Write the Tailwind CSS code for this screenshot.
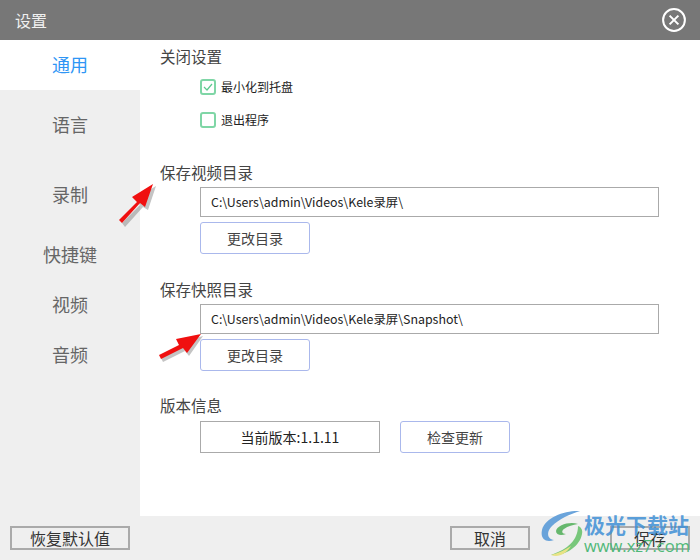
<!DOCTYPE html>
<html lang="zh">
<head>
<meta charset="utf-8">
<script src="https://cdn.jsdelivr.net/npm/@tailwindcss/browser@4"></script>
</head>
<body class="bg-white">
<div class="relative w-[700px] h-[560px] overflow-hidden flex flex-col bg-white text-[#333] font-['Noto_Sans_CJK_SC','Noto_Sans',sans-serif]">
  <header class="h-10 shrink-0 bg-[#777777] flex items-center justify-between pl-[15px] pr-[14px]">
    <span class="text-[#f0f0f0] text-[16px] leading-none">设置</span>
    <svg class="w-6 h-6" viewBox="0 0 24 24" fill="none" stroke="#ffffff"><circle cx="12" cy="12" r="10.9" stroke-width="2"/><path d="M7.6 7.6 16.4 16.4M16.4 7.6 7.6 16.4" stroke-width="2"/></svg>
  </header>
  <div class="flex-1 flex min-h-0">
    <nav class="w-[140px] shrink-0 bg-[#efefef] flex flex-col text-[18px] text-[#666] text-center">
      <div class="h-[50px] pb-[1px] bg-white text-[#2f96f5] flex items-center justify-center">通用</div>
      <div class="h-[70px] pb-[1px] flex items-center justify-center">语言</div>
      <div class="h-[70px] pb-[1px] flex items-center justify-center">录制</div>
      <div class="h-[50px] pb-[1px] flex items-center justify-center">快捷键</div>
      <div class="h-[50px] pb-[1px] flex items-center justify-center">视频</div>
      <div class="h-[50px] pb-[1px] flex items-center justify-center">音频</div>
    </nav>
    <main class="flex-1 pl-5 pr-[41px] flex flex-col text-[#444]">
      <h2 class="h-6 mt-[4px] text-[15.5px] leading-6 font-normal">关闭设置</h2>
      <div class="pl-10 mt-[11px] flex flex-col gap-[17px] text-[12px] text-[#222]">
        <label class="h-4 flex items-center gap-[5px]">
          <span class="w-4 h-4 border-2 border-[#7fd6a6] rounded-[3px] flex items-center justify-center">
            <svg class="w-[10px] h-[10px]" viewBox="0 0 10 10" fill="none" stroke="#5cc98e" stroke-width="1.2"><path d="M1 5 4 8 9 2"/></svg>
          </span>最小化到托盘
        </label>
        <label class="h-4 flex items-center gap-[5px]">
          <span class="w-4 h-4 border-2 border-[#7fd6a6] rounded-[3px]"></span>退出程序
        </label>
      </div>
      <h2 class="h-6 mt-[32px] text-[15.5px] leading-6 font-normal">保存视频目录</h2>
      <div class="ml-10 mt-[3px] h-[30px] border border-[#aaaaaa] pl-[10px] flex items-center text-[12.4px] text-[#222]">C:\Users\admin\Videos\Kele录屏\</div>
      <button class="ml-10 mt-[5px] w-[110px] h-8 border border-[#aab8ec] rounded-[3px] bg-white text-[14px] text-[#444]">更改目录</button>
      <h2 class="h-6 mt-[23px] text-[15.5px] leading-6 font-normal">保存快照目录</h2>
      <div class="ml-10 mt-[3px] h-[30px] border border-[#aaaaaa] pl-[10px] flex items-center text-[12.4px] text-[#222]">C:\Users\admin\Videos\Kele录屏\Snapshot\</div>
      <button class="ml-10 mt-[5px] w-[110px] h-8 border border-[#aab8ec] rounded-[3px] bg-white text-[14px] text-[#444]">更改目录</button>
      <h2 class="h-6 mt-[22px] text-[15.5px] leading-6 font-normal">版本信息</h2>
      <div class="ml-10 mt-[4px] flex gap-5">
        <div class="w-[180px] h-8 border border-[#aaaaaa] flex items-center justify-center text-[14px] text-[#222]">当前版本:1.1.11</div>
        <button class="w-[110px] h-8 border border-[#aab8ec] rounded-[3px] bg-white text-[14px] text-[#444]">检查更新</button>
      </div>
    </main>
  </div>
  <footer class="h-11 shrink-0 bg-[#efefef] flex items-center justify-between px-[10px] text-[16px] text-[#333]">
    <button class="w-[120px] h-6 border-2 border-[#aaaaaa] flex items-center justify-center">恢复默认值</button>
    <div class="flex gap-20">
      <button class="w-20 h-6 border-2 border-[#aaaaaa] flex items-center justify-center">取消</button>
      <button class="w-20 h-6 border-2 border-[#aaaaaa] flex items-center justify-center">保存</button>
    </div>
  </footer>

  <svg class="absolute left-[112px] top-[178px] w-[50px] h-[50px]" viewBox="0 0 50 50">
    <path d="M7 43 25 25 20 19 41 6 33 30 28 27 10 47Z" fill="#555" opacity=".35" transform="translate(3 2)"/>
    <path d="M7 42 25 24 20 19 41 6 33 29 28 25 10 45Z" fill="#f01010"/>
  </svg>
  <svg class="absolute left-[155px] top-[333px] w-[50px] h-[30px]" viewBox="0 0 50 30">
    <path d="M4 23 24 13 21 7 32 5 46 1 32 21 28 16 6 27Z" fill="#555" opacity=".35" transform="translate(2 2)"/>
    <path d="M4 22 24 12 21 6 46 1 32 20 28 15 6 26Z" fill="#f01010"/>
  </svg>

  <div class="absolute left-[540px] top-[508px] w-[160px] h-[52px]">
    <svg class="absolute left-0 top-0 w-[44px] h-[52px]" viewBox="0 0 44 52" fill="none" opacity=".9">
      <path d="M40 3C26 2 5 9 2 22 0 31 6 35 14 32 7 31 6 24 12 18 19 11 30 6 40 3Z" fill="#5b9bd8"/>
      <path d="M38 16C30 13 17 17 16 23c0 4 5 5 10 3-4 0-5-3-2-5 4-3 9-4 14-5Z" fill="#58b25f"/>
      <path d="M38 18C38 32 28 41 11 47 26 48 40 38 42 26 43 22 41 19 38 18Z" fill="#6cc36f"/>
      <path d="M11 47C19 45 25 42 31 38 26 46 18 50 11 47Z" fill="#e8e27a"/>
    </svg>
    <div class="absolute left-[44px] top-[1px] text-[21px] leading-[30px] font-bold text-[#3f8fd6]/85 whitespace-nowrap">极光下载站</div>
    <div class="absolute left-[44px] top-[28px] text-[16.5px] leading-[20px] font-['Open_Sans',sans-serif] text-[#4fb878] whitespace-nowrap">www.xz7.com</div>
  </div>
</div>
</body>
</html>
